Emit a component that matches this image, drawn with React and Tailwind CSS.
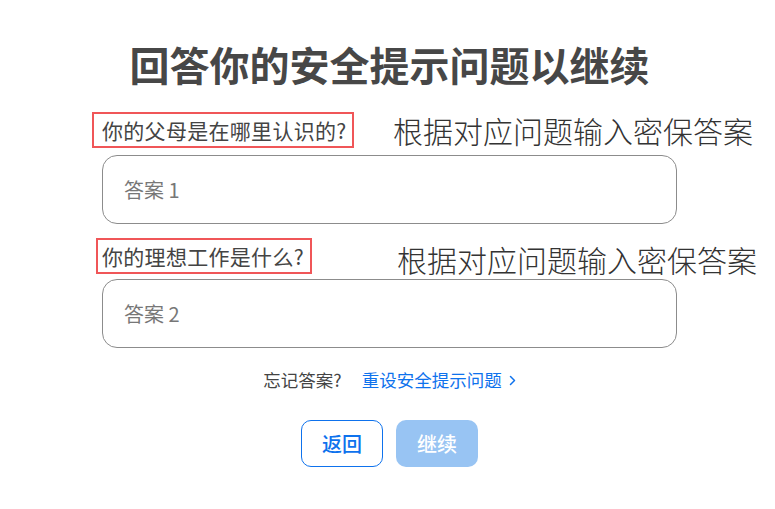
import { useState } from 'react';

const questions = [
  { id: 1, label: '你的父母是在哪里认识的?', boxClass: 'ml-[-10px] pl-2 pr-[5px]', noteClass: 'top-[1px] left-[291px]' },
  { id: 2, label: '你的理想工作是什么?', boxClass: 'ml-[-6px] pl-[4px] pr-[6px]', noteClass: 'top-[4px] left-[295px]' },
];

const App = () => {
  const [answers, setAnswers] = useState({ 1: '', 2: '' });
  const canContinue = answers[1].trim() && answers[2].trim();

  return (
    <div className="h-[509px] w-full overflow-hidden bg-white font-['Noto_Sans_CJK_SC','Noto_Sans',sans-serif] text-[#444]">
      <div className="ml-[102px] w-[575px] pt-[44px]">
        <h1 className="text-center text-[40px] font-bold leading-[40px] text-[#474747]">回答你的安全提示问题以继续</h1>

        <div className="mt-[28px]">
          {questions.map((q, index) => (
            <div key={q.id} className={index > 0 ? 'mt-[14px]' : ''}>
              <div className="relative">
                <div className={`inline-block border-2 border-[#f05658] text-[21px] font-normal leading-[32px] tracking-[0.3px] text-[#444] ${q.boxClass}`}>
                  {q.label}
                </div>
                {/* annotation laid over the screenshot */}
                <span className={`absolute whitespace-nowrap text-[30px] font-light leading-[34px] text-[#333] ${q.noteClass}`}>
                  根据对应问题输入密保答案
                </span>
              </div>
              <input
                value={answers[q.id]}
                onChange={(e) => setAnswers({ ...answers, [q.id]: e.target.value })}
                placeholder={`答案 ${q.id}`}
                className={`block h-[69px] w-full rounded-[15px] border border-[#8c8c8c] bg-white pl-[21px] text-[20px] text-[#333] outline-none placeholder:text-[#777] ${index > 0 ? 'mt-[5px]' : 'mt-[7px]'}`}
              />
            </div>
          ))}
        </div>

        <div className="mt-[20px] flex items-center justify-center gap-[20px] text-[17.5px] leading-[24px]">
          <span className="text-[#444]">忘记答案?</span>
          <a href="#" className="flex items-center gap-[7px] text-[#0e72ed]">
            重设安全提示问题
            <svg width="7" height="11" viewBox="0 0 7 11" fill="none">
              <path d="M1.5 1.5L5.5 5.5L1.5 9.5" stroke="#0e72ed" strokeWidth="1.5" strokeLinecap="round" strokeLinejoin="round" />
            </svg>
          </a>
        </div>

        <div className="mt-[28px] flex justify-center gap-[13px]">
          <button className="h-[47px] w-[82px] rounded-[10px] border border-[#0e72ed] bg-white text-[20px] font-medium text-[#0e72ed]">
            返回
          </button>
          <button
            disabled={!canContinue}
            className="h-[47px] w-[82px] rounded-[10px] bg-[#98c4f3] text-[20px] font-medium text-white enabled:bg-[#0e72ed]"
          >
            继续
          </button>
        </div>
      </div>
    </div>
  );
};

export default App;
